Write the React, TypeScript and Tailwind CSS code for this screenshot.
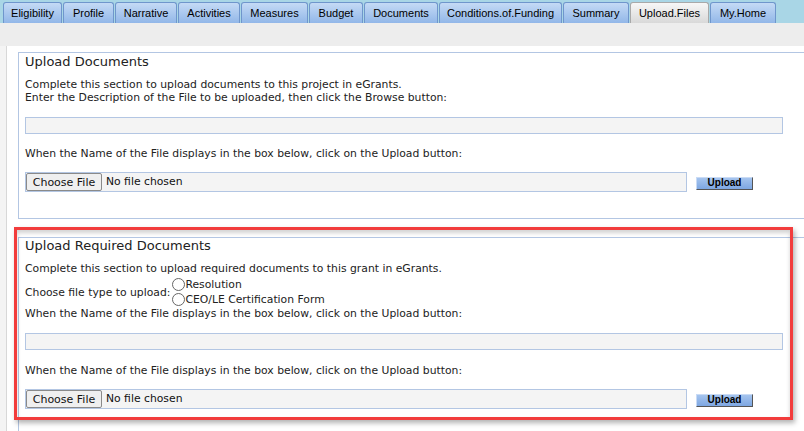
import React from "react";

const tabs = [
  { label: "Eligibility", w: "w-[59px]" },
  { label: "Profile", w: "w-[51px]" },
  { label: "Narrative", w: "w-[62px]" },
  { label: "Activities", w: "w-[62px]" },
  { label: "Measures", w: "w-[67px]" },
  { label: "Budget", w: "w-[54px]" },
  { label: "Documents", w: "w-[74px]" },
  { label: "Conditions.of.Funding", w: "w-[123px]" },
  { label: "Summary", w: "w-[66px]" },
  { label: "Upload.Files", w: "w-[79px]", active: true },
  { label: "My.Home", w: "w-[66px]" },
];

function FileRow() {
  return (
    <div className="flex items-center">
      <div className="flex items-center w-[662px] h-[20px] border border-[#b3c6e3] bg-[#f4f4f4]">
        <button className="h-[18px] w-[76px] border border-[#8a8a8a] rounded-[2px] bg-[#efefef] text-[11px] leading-none text-[#111]">
          Choose File
        </button>
        <span className="ml-[4px] text-[10.8px] text-[#111]">No file chosen</span>
      </div>
      <button className="ml-[9px] mt-[2px] w-[57px] h-[13px] bg-gradient-to-b from-[#a5c4ee] to-[#7ea7e2] border border-t-[#c9dbf5] border-l-[#c9dbf5] border-r-[#555] border-b-[#555] font-['Liberation_Sans',Arial,sans-serif] font-bold text-[10px] leading-none text-black">
        Upload
      </button>
    </div>
  );
}

function TextBox() {
  return <div className="w-[758px] h-[17px] border border-[#b3c6e3] bg-[#f4f4f4]" />;
}

function Radio({ label }: { label: string }) {
  return (
    <div className="flex items-center h-[15px]">
      <span className="w-[13px] h-[13px] rounded-full border border-[#666] bg-white" />
      <span>{label}</span>
    </div>
  );
}

export default function App() {
  return (
    <div className="relative w-[804px] h-[431px] overflow-hidden bg-white font-['DejaVu_Sans',Verdana,sans-serif] text-[#222]">
      {/* tab strip */}
      <div className="h-[23px] bg-[#a9d6e6] flex items-end pl-[3px] gap-[1px] font-['Liberation_Sans',Arial,sans-serif] text-[11px] text-black">
        {tabs.map((t) => (
          <div
            key={t.label}
            className={`${t.w} shrink-0 h-[21px] flex items-center justify-center rounded-t-[3px] border border-b-0 ${
              t.active
                ? "bg-gradient-to-b from-[#f7f7f7] to-[#d9d9d9] border-[#a9a9a9]"
                : "bg-gradient-to-b from-[#c4daf5] to-[#92b7e8] border-[#6f96cc]"
            }`}
          >
            {t.label}
          </div>
        ))}
      </div>
      <div className="h-[23px] bg-[#ededed]" />

      <div className="flex h-[385px]">
        <div className="w-[7px] shrink-0 bg-[#f4f4f4] border-r border-[#d8d8d8]" />
        <div className="shrink-0 pl-[11px] pt-[6px]">
          {/* Upload Documents */}
          <div className="w-[800px] border border-[#b3c6e3] pl-[6px] pt-[1px] pb-[26px]">
            <div className="text-[13px] leading-[16px]">Upload Documents</div>
            <div className="mt-[8px] text-[10.8px] leading-[13px]">
              <div>Complete this section to upload documents to this project in eGrants.</div>
              <div>Enter the Description of the File to be uploaded, then click the Browse button:</div>
            </div>
            <div className="mt-[13px]">
              <TextBox />
            </div>
            <div className="mt-[13px] text-[10.8px] leading-[13px]">
              When the Name of the File displays in the box below, click on the Upload button:
            </div>
            <div className="mt-[12px]">
              <FileRow />
            </div>
          </div>

          {/* Upload Required Documents */}
          <div className="mt-[18px] w-[800px] h-[300px] border border-[#b3c6e3] pl-[6px]">
            <div className="text-[13px] leading-[16px]">Upload Required Documents</div>
            <div className="mt-[8px] text-[10.8px] leading-[13px]">
              Complete this section to upload required documents to this grant in eGrants.
            </div>
            <div className="mt-[2px] flex items-center text-[10.8px] leading-[13px]">
              <span className="mr-[2px]">Choose file type to upload:</span>
              <div>
                <Radio label="Resolution" />
                <Radio label="CEO/LE Certification Form" />
              </div>
            </div>
            <div className="text-[10.8px] leading-[13px]">
              When the Name of the File displays in the box below, click on the Upload button:
            </div>
            <div className="mt-[13px]">
              <TextBox />
            </div>
            <div className="mt-[14px] text-[10.8px] leading-[13px]">
              When the Name of the File displays in the box below, click on the Upload button:
            </div>
            <div className="mt-[12px]">
              <FileRow />
            </div>
          </div>
        </div>
      </div>

      {/* red highlight annotation */}
      <div className="absolute left-[14px] top-[227px] w-[779px] h-[193px] border-[3px] border-[#f23c3c] shadow-[2px_3px_5px_rgba(0,0,0,0.3),inset_0_3px_4px_rgba(0,0,0,0.18)] pointer-events-none" />
    </div>
  );
}
